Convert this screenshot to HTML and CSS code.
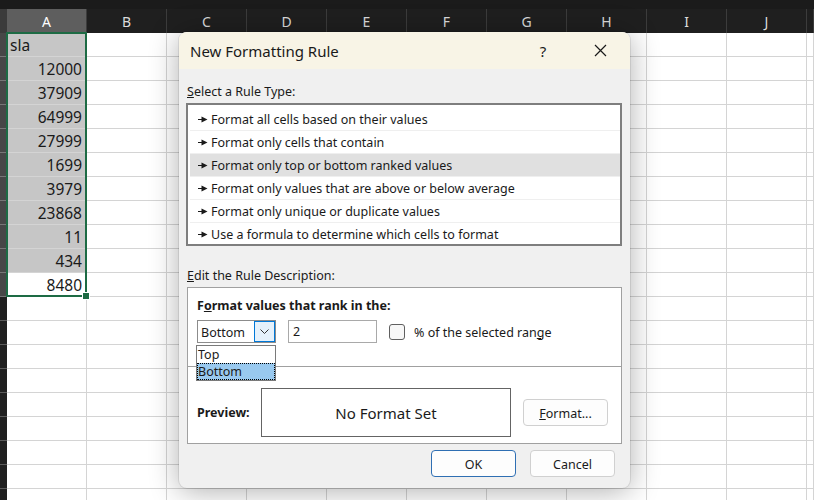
FILE: index.html
```html
<!DOCTYPE html>
<html>
<head>
<meta charset="utf-8">
<link rel="stylesheet" href="styles.css">
</head>
<body>
<div class="sheet">
  <div class="topbar"></div>
  <div class="colheads">
    <div class="corner"></div>
    <div class="ch sel">A</div><div class="ch">B</div><div class="ch">C</div><div class="ch">D</div><div class="ch">E</div><div class="ch">F</div><div class="ch">G</div><div class="ch">H</div><div class="ch">I</div><div class="ch">J</div><div class="ch fill"></div>
  </div>
  <div class="grid">
    <div class="row"><div class="rh sel"></div><div class="c hl txt">sla</div><div class="c"></div><div class="c"></div><div class="c"></div><div class="c"></div><div class="c"></div><div class="c"></div><div class="c"></div><div class="c"></div><div class="c"></div><div class="c fill"></div></div>
    <div class="row"><div class="rh sel"></div><div class="c hl">12000</div><div class="c"></div><div class="c"></div><div class="c"></div><div class="c"></div><div class="c"></div><div class="c"></div><div class="c"></div><div class="c"></div><div class="c"></div><div class="c fill"></div></div>
    <div class="row"><div class="rh sel"></div><div class="c hl">37909</div><div class="c"></div><div class="c"></div><div class="c"></div><div class="c"></div><div class="c"></div><div class="c"></div><div class="c"></div><div class="c"></div><div class="c"></div><div class="c fill"></div></div>
    <div class="row"><div class="rh sel"></div><div class="c hl">64999</div><div class="c"></div><div class="c"></div><div class="c"></div><div class="c"></div><div class="c"></div><div class="c"></div><div class="c"></div><div class="c"></div><div class="c"></div><div class="c fill"></div></div>
    <div class="row"><div class="rh sel"></div><div class="c hl">27999</div><div class="c"></div><div class="c"></div><div class="c"></div><div class="c"></div><div class="c"></div><div class="c"></div><div class="c"></div><div class="c"></div><div class="c"></div><div class="c fill"></div></div>
    <div class="row"><div class="rh sel"></div><div class="c hl">1699</div><div class="c"></div><div class="c"></div><div class="c"></div><div class="c"></div><div class="c"></div><div class="c"></div><div class="c"></div><div class="c"></div><div class="c"></div><div class="c fill"></div></div>
    <div class="row"><div class="rh sel"></div><div class="c hl">3979</div><div class="c"></div><div class="c"></div><div class="c"></div><div class="c"></div><div class="c"></div><div class="c"></div><div class="c"></div><div class="c"></div><div class="c"></div><div class="c fill"></div></div>
    <div class="row"><div class="rh sel"></div><div class="c hl">23868</div><div class="c"></div><div class="c"></div><div class="c"></div><div class="c"></div><div class="c"></div><div class="c"></div><div class="c"></div><div class="c"></div><div class="c"></div><div class="c fill"></div></div>
    <div class="row"><div class="rh sel"></div><div class="c hl">11</div><div class="c"></div><div class="c"></div><div class="c"></div><div class="c"></div><div class="c"></div><div class="c"></div><div class="c"></div><div class="c"></div><div class="c"></div><div class="c fill"></div></div>
    <div class="row"><div class="rh sel"></div><div class="c hl">434</div><div class="c"></div><div class="c"></div><div class="c"></div><div class="c"></div><div class="c"></div><div class="c"></div><div class="c"></div><div class="c"></div><div class="c"></div><div class="c fill"></div></div>
    <div class="row"><div class="rh sel"></div><div class="c">8480</div><div class="c"></div><div class="c"></div><div class="c"></div><div class="c"></div><div class="c"></div><div class="c"></div><div class="c"></div><div class="c"></div><div class="c"></div><div class="c fill"></div></div>
    <div class="row"><div class="rh"></div><div class="c"></div><div class="c"></div><div class="c"></div><div class="c"></div><div class="c"></div><div class="c"></div><div class="c"></div><div class="c"></div><div class="c"></div><div class="c"></div><div class="c fill"></div></div>
    <div class="row"><div class="rh"></div><div class="c"></div><div class="c"></div><div class="c"></div><div class="c"></div><div class="c"></div><div class="c"></div><div class="c"></div><div class="c"></div><div class="c"></div><div class="c"></div><div class="c fill"></div></div>
    <div class="row"><div class="rh"></div><div class="c"></div><div class="c"></div><div class="c"></div><div class="c"></div><div class="c"></div><div class="c"></div><div class="c"></div><div class="c"></div><div class="c"></div><div class="c"></div><div class="c fill"></div></div>
    <div class="row"><div class="rh"></div><div class="c"></div><div class="c"></div><div class="c"></div><div class="c"></div><div class="c"></div><div class="c"></div><div class="c"></div><div class="c"></div><div class="c"></div><div class="c"></div><div class="c fill"></div></div>
    <div class="row"><div class="rh"></div><div class="c"></div><div class="c"></div><div class="c"></div><div class="c"></div><div class="c"></div><div class="c"></div><div class="c"></div><div class="c"></div><div class="c"></div><div class="c"></div><div class="c fill"></div></div>
    <div class="row"><div class="rh"></div><div class="c"></div><div class="c"></div><div class="c"></div><div class="c"></div><div class="c"></div><div class="c"></div><div class="c"></div><div class="c"></div><div class="c"></div><div class="c"></div><div class="c fill"></div></div>
    <div class="row"><div class="rh"></div><div class="c"></div><div class="c"></div><div class="c"></div><div class="c"></div><div class="c"></div><div class="c"></div><div class="c"></div><div class="c"></div><div class="c"></div><div class="c"></div><div class="c fill"></div></div>
    <div class="row"><div class="rh"></div><div class="c"></div><div class="c"></div><div class="c"></div><div class="c"></div><div class="c"></div><div class="c"></div><div class="c"></div><div class="c"></div><div class="c"></div><div class="c"></div><div class="c fill"></div></div>
    <div class="row"><div class="rh"></div><div class="c"></div><div class="c"></div><div class="c"></div><div class="c"></div><div class="c"></div><div class="c"></div><div class="c"></div><div class="c"></div><div class="c"></div><div class="c"></div><div class="c fill"></div></div>
  </div>

  <div class="selection"><span class="handle"></span></div>

  <div class="dialog">
    <div class="titlebar">
      <span class="title">New Formatting Rule</span>
      <span class="tbtn help">?</span>
      <span class="tbtn close"><svg width="13" height="13" viewBox="0 0 13 13"><path d="M1 1L12 12M12 1L1 12" stroke="#1a1a1a" stroke-width="1.2" fill="none"/></svg></span>
    </div>
    <div class="body">
      <div class="label"><u>S</u>elect a Rule Type:</div>
      <div class="listbox">
        <div class="item"><svg class="arr" width="10" height="7" viewBox="0 0 10 7"><path d="M0 3.5H4" stroke="#1a1a1a" stroke-width="1.2"/><path d="M3.5 0.5L9.5 3.5L3.5 6.5Z" fill="#1a1a1a"/></svg>Format all cells based on their values</div>
        <div class="item"><svg class="arr" width="10" height="7" viewBox="0 0 10 7"><path d="M0 3.5H4" stroke="#1a1a1a" stroke-width="1.2"/><path d="M3.5 0.5L9.5 3.5L3.5 6.5Z" fill="#1a1a1a"/></svg>Format only cells that contain</div>
        <div class="item active"><svg class="arr" width="10" height="7" viewBox="0 0 10 7"><path d="M0 3.5H4" stroke="#1a1a1a" stroke-width="1.2"/><path d="M3.5 0.5L9.5 3.5L3.5 6.5Z" fill="#1a1a1a"/></svg>Format only top or bottom ranked values</div>
        <div class="item"><svg class="arr" width="10" height="7" viewBox="0 0 10 7"><path d="M0 3.5H4" stroke="#1a1a1a" stroke-width="1.2"/><path d="M3.5 0.5L9.5 3.5L3.5 6.5Z" fill="#1a1a1a"/></svg>Format only values that are above or below average</div>
        <div class="item"><svg class="arr" width="10" height="7" viewBox="0 0 10 7"><path d="M0 3.5H4" stroke="#1a1a1a" stroke-width="1.2"/><path d="M3.5 0.5L9.5 3.5L3.5 6.5Z" fill="#1a1a1a"/></svg>Format only unique or duplicate values</div>
        <div class="item last"><svg class="arr" width="10" height="7" viewBox="0 0 10 7"><path d="M0 3.5H4" stroke="#1a1a1a" stroke-width="1.2"/><path d="M3.5 0.5L9.5 3.5L3.5 6.5Z" fill="#1a1a1a"/></svg>Use a formula to determine which cells to format</div>
      </div>
      <div class="label label2"><u>E</u>dit the Rule Description:</div>
      <div class="descbox">
        <div class="desc-top">
          <div class="bold">F<u>o</u>rmat values that rank in the:</div>
          <div class="controls">
            <div class="select"><span>Bottom</span><span class="ddbtn"><svg width="9" height="5" viewBox="0 0 9 5"><path d="M0.5 0.5L4.5 4.5L8.5 0.5" stroke="#333" stroke-width="1" fill="none"/></svg></span></div>
            <div class="input">2</div>
            <div class="checkbox"></div>
            <div class="cblabel">% of the selected ran<u>g</u>e</div>
          </div>
        </div>
        <div class="sep"></div>
        <div class="preview-row">
          <div class="bold plabel">Preview:</div>
          <div class="preview">No Format Set</div>
          <div class="btn fmt"><u>F</u>ormat...</div>
        </div>
        <div class="dropdown">
          <div class="opt">Top</div>
          <div class="opt chosen">Bottom</div>
        </div>
      </div>
      <div class="buttons">
        <div class="btn ok">OK</div>
        <div class="btn">Cancel</div>
      </div>
    </div>
  </div>
</div>
</body>
</html>
```

FILE: styles.css
```css
html, body {
  margin: 0;
  padding: 0;
}
body {
  width: 814px;
  height: 500px;
  overflow: hidden;
  font-family: "Noto Sans", "Open Sans", sans-serif;
  color: #1a1a1a;
}
.sheet {
  position: relative;
  width: 814px;
  height: 500px;
  overflow: hidden;
  background: #fff;
}
.topbar {
  height: 9px;
  background: #1b1b1b;
}
.colheads {
  display: flex;
  height: 24px;
  background: #1f1f1f;
  color: #dcdcdc;
  font-size: 14px;
}
.colheads .corner {
  width: 7px;
  flex: none;
  background: #3b3b3b;
}
.ch {
  width: 80px;
  flex: none;
  box-sizing: border-box;
  border-right: 1px solid #3c3c3c;
  display: flex;
  align-items: center;
  justify-content: center;
}
.ch.sel {
  background: #5e5e5e;
  color: #fff;
}
.ch.fill, .c.fill {
  flex: 1;
}
.row {
  display: flex;
  height: 24px;
}
.rh {
  width: 7px;
  flex: none;
  box-sizing: border-box;
  background: #1f1f1f;
  border-bottom: 1px solid #5a5a5a;
}
.rh.sel {
  background: #474747;
  border-bottom-color: #777;
}
.c {
  width: 80px;
  flex: none;
  box-sizing: border-box;
  border-right: 1px solid #d4d4d4;
  border-bottom: 1px solid #d4d4d4;
  font-size: 15.5px;
  line-height: 22px;
  padding-top: 1px;
  text-align: right;
  padding-right: 4px;
  color: #1a1a1a;
}
.c.hl {
  background: #c6c6c6;
}
.c.txt {
  text-align: left;
  padding-left: 3px;
}
.selection {
  position: absolute;
  left: 6px;
  top: 32px;
  width: 81px;
  height: 265px;
  box-sizing: border-box;
  border: 2px solid #1d6b44;
}
.handle {
  position: absolute;
  right: -5px;
  bottom: -5px;
  width: 6px;
  height: 6px;
  background: #1d6b44;
  border: 1px solid #fff;
}

/* dialog */
.dialog {
  position: absolute;
  left: 179px;
  top: 32px;
  width: 451px;
  height: 456px;
  border-radius: 8px;
  background: #f0f0f0;
  box-shadow: 0 3px 30px rgba(0, 0, 0, 0.32), 0 0 0 1px rgba(0, 0, 0, 0.08);
  overflow: hidden;
  font-size: 12.5px;
}
.titlebar {
  height: 37px;
  background: #f8f4e6;
  display: flex;
  align-items: center;
  padding-left: 11px;
  padding-right: 7px;
}
.title {
  font-size: 15px;
  flex: 1;
}
.tbtn {
  width: 46px;
  height: 37px;
  display: flex;
  align-items: center;
  justify-content: center;
}
.help {
  font-size: 15px;
  margin-right: 11px;
}
.body {
  padding: 0 8px 0 7px;
}
.label {
  height: 18px;
  line-height: 18px;
  margin-top: 13px;
  padding-top: 1px;
  padding-left: 1px;
}
.listbox {
  margin-top: 2px;
  height: 143px;
  box-sizing: border-box;
  border: 2px solid #7e7e7e;
  background: #fff;
  padding: 3px 0 0 2px;
}
.item {
  height: 23px;
  box-sizing: border-box;
  border-bottom: 1px solid #efefef;
  display: flex;
  align-items: center;
  padding-left: 8px;
  white-space: nowrap;
}
.item.last {
  border-bottom: none;
}
.item.active {
  background: #e0e0e0;
}
.arr {
  margin-right: 3px;
  flex: none;
}
.label2 {
  margin-top: 20px;
  padding-top: 1px;
}
.descbox {
  position: relative;
  margin-top: 2px;
  margin-left: 1px;
  height: 157px;
  box-sizing: border-box;
  border: 1px solid #a0a0a0;
  background: #fff;
}
.desc-top {
  padding: 9px 0 0 9px;
  height: 78px;
  box-sizing: border-box;
}
.bold {
  font-weight: bold;
  height: 18px;
  line-height: 18px;
}
.controls {
  display: flex;
  align-items: center;
  margin-top: 5px;
  height: 23px;
}
.select {
  width: 79px;
  height: 23px;
  box-sizing: border-box;
  border: 1px solid #8c8c8c;
  display: flex;
  align-items: center;
  justify-content: space-between;
  padding-left: 3px;
  padding-top: 1px;
}
.ddbtn {
  width: 21px;
  height: 21px;
  margin-top: -1px;
  box-sizing: border-box;
  border: 1px solid #0078d7;
  background: #e5f1fb;
  display: flex;
  align-items: center;
  justify-content: center;
}
.input {
  width: 89px;
  height: 23px;
  box-sizing: border-box;
  border: 1px solid #a9a9a9;
  margin-left: 12px;
  padding-left: 4px;
  padding-top: 1px;
  line-height: 20px;
}
.checkbox {
  width: 16px;
  height: 16px;
  box-sizing: border-box;
  border: 1px solid #5f5f5f;
  border-radius: 3px;
  background: #f7f7f7;
  margin-left: 12px;
}
.cblabel {
  margin-left: 9px;
  padding-top: 1px;
}
.sep {
  height: 1px;
  background: #a0a0a0;
}
.preview-row {
  display: flex;
  align-items: center;
  padding-left: 9px;
  margin-top: 21px;
  height: 49px;
}
.plabel {
  width: 64px;
  padding-top: 1px;
}
.preview {
  width: 250px;
  height: 49px;
  box-sizing: border-box;
  border: 1px solid #646464;
  display: flex;
  align-items: center;
  justify-content: center;
  font-size: 15px;
  padding-top: 1px;
}
.btn {
  width: 85px;
  height: 27px;
  box-sizing: border-box;
  border: 1px solid #d0d0d0;
  border-radius: 4px;
  background: #fdfdfd;
  display: flex;
  align-items: center;
  justify-content: center;
  padding-top: 1px;
}
.fmt {
  margin-left: 12px;
}
.dropdown {
  position: absolute;
  left: 8px;
  top: 57px;
  width: 80px;
  height: 36px;
  box-sizing: border-box;
  border: 1px solid #7a7a7a;
  background: #fff;
  font-size: 12.5px;
}
.opt {
  height: 17px;
  line-height: 15px;
  padding-top: 1px;
  padding-left: 1px;
  box-sizing: border-box;
  overflow: hidden;
}
.opt.chosen {
  background: #99c9ef;
  border: 1px dotted #000;
  line-height: 15px;
  padding-top: 0;
  padding-left: 0;
}
.buttons {
  display: flex;
  justify-content: flex-end;
  gap: 14px;
  margin-top: 6px;
  padding-right: 7px;
}
.btn.ok {
  border-color: #2f6fb3;
}
```
